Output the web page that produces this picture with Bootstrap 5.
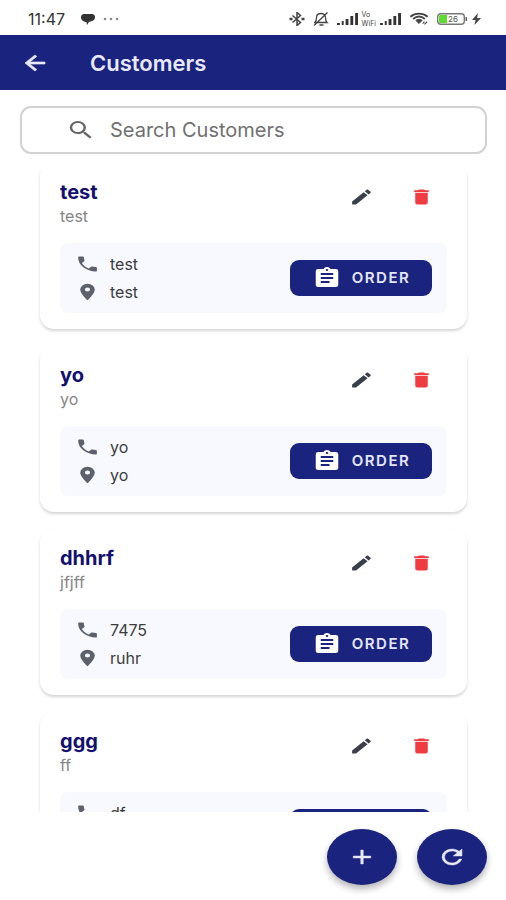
<!DOCTYPE html>
<html lang="en">
<head>
<meta charset="utf-8">
<meta name="viewport" content="width=device-width, initial-scale=1">
<title>Customers</title>
<link href="https://cdn.jsdelivr.net/npm/bootstrap@5.3.0/dist/css/bootstrap.min.css" rel="stylesheet">
<style>
:root { --navy: #1a237e; }
body { font-family: Inter, Roboto, sans-serif; background: #fff; color: #333; }
.ico { width: 30px; height: 24px; fill: currentColor; flex: none; display: block; }
.ico-sm { width: 25px; height: 20px; }
.status-bar { height: 35px; padding: 2px 25px 0 28px; font-size: 16px; color: #333; }
.status-bar svg { display: block; flex: none; }
.vowifi { font-size: 7px; line-height: 9px; color: #444; }
.app-bar { height: 55px; padding: 0 20px; background: var(--navy); color: #e8eafc; }
.app-title { font-size: 22px; line-height: 28px; font-weight: 600; margin-left: 40px; }
.search-box { margin: 16px 19px 0 20px; height: 48px; padding: 0 28px 0 44px; border: 2px solid #d2d2d2; border-radius: 11px; color: #666; }
.search-box input { font-size: 20px; color: #555; margin-left: 14px; min-width: 0; outline: 0; }
.search-box input::placeholder { color: #707070; opacity: 1; }
.customer-list { min-height: 0; padding: 9px 39px 0 40px; gap: 17px; }
.customer { flex: none; height: 166px; padding: 17px 20px 16px; border-radius: 14px; background: #fff; box-shadow: 0 2px 3px rgba(0,0,0,.17); }
.customer-name { font-size: 20px; line-height: 24px; font-weight: 700; color: #14106e; }
.customer-sub { font-size: 16px; line-height: 20px; margin-top: 2px; color: #858585; }
.customer-actions { gap: 35px; padding: 7px 13px 0 0; }
.edit-btn { color: #3a3f4b; }
.delete-btn { color: #ef3b42; }
.info { height: 70px; padding: 0 15px; background: #f7f9fe; border-radius: 8px; }
.info-line { font-size: 16px; line-height: 20px; gap: 10px; color: #3c3c3c; }
.info-line .ico { color: #5c616c; }
.order-btn { width: 142px; height: 36px; gap: 10px; border-radius: 9px; background: var(--navy); color: #e4e7fb; font-size: 15px; font-weight: 600; letter-spacing: 1.5px; }
.order-btn .ico { color: #fff; }
.order-btn:hover { background: #283593; color: #fff; }
.fabs { height: 88px; padding: 17px 19px 0; gap: 20px; }
.fab { width: 70px; height: 56px; border-radius: 50%; background: var(--navy); color: #e8eafc; box-shadow: 0 4px 7px rgba(0,0,0,.3); }
.fab:hover { background: #283593; color: #fff; }
</style>
<script src="https://cdn.jsdelivr.net/npm/bootstrap@5.3.0/dist/js/bootstrap.bundle.min.js" defer></script>
</head>
<body class="vh-100 d-flex flex-column overflow-hidden">
<svg class="d-none" aria-hidden="true">
  <symbol id="i-back" viewBox="0 0 24 24" preserveAspectRatio="none"><path d="M20 11H7.83l5.59-5.59L12 4l-8 8 8 8 1.41-1.41L7.83 13H20z" stroke="currentColor" stroke-width=".6"/></symbol>
  <symbol id="i-search" viewBox="0 0 24 24" preserveAspectRatio="none"><path d="M15.5 14h-.79l-.28-.27A6.47 6.47 0 0 0 16 9.5 6.5 6.5 0 1 0 9.5 16c1.61 0 3.09-.59 4.23-1.57l.27.28v.79l5 4.99L20.49 19zm-6 0C7.01 14 5 11.99 5 9.5S7.01 5 9.5 5 14 7.01 14 9.5 11.99 14 9.5 14z"/></symbol>
  <symbol id="i-edit" viewBox="0 0 24 24" preserveAspectRatio="none"><path d="M20.71 7.04C21.1 6.65 21.1 6 20.71 5.63L18.37 3.29C18 2.9 17.35 2.9 16.96 3.29L15.12 5.12L18.87 8.87M3 17.25V21H6.75L17.81 9.93L14.06 6.18Z"/></symbol>
  <symbol id="i-delete" viewBox="0 0 24 24" preserveAspectRatio="none"><path d="M19 4H15.5L14.5 3H9.5L8.5 4H5V6H19M6 19A2 2 0 0 0 8 21H16A2 2 0 0 0 18 19V7H6Z"/></symbol>
  <symbol id="i-phone" viewBox="0 0 24 24" preserveAspectRatio="none"><path d="M6.62 10.79C8.06 13.62 10.38 15.94 13.21 17.38L15.41 15.18C15.69 14.9 16.08 14.82 16.43 14.93C17.55 15.3 18.75 15.5 20 15.5A1 1 0 0 1 21 16.5V20A1 1 0 0 1 20 21A17 17 0 0 1 3 4A1 1 0 0 1 4 3H7.5A1 1 0 0 1 8.5 4C8.5 5.25 8.7 6.45 9.07 7.57C9.18 7.92 9.1 8.31 8.82 8.59Z"/></symbol>
  <symbol id="i-pin" viewBox="0 0 24 24" preserveAspectRatio="none"><path d="M12 11.5A2.5 2.5 0 0 1 9.5 9A2.5 2.5 0 0 1 12 6.5A2.5 2.5 0 0 1 14.5 9A2.5 2.5 0 0 1 12 11.5M12 2A7 7 0 0 0 5 9C5 14.25 12 22 12 22C12 22 19 14.25 19 9A7 7 0 0 0 12 2Z"/></symbol>
  <symbol id="i-clip" viewBox="0 0 24 24" preserveAspectRatio="none"><path d="M17 9H7V7H17M17 13H7V11H17M14 17H7V15H14M12 3A1 1 0 0 1 13 4A1 1 0 0 1 12 5A1 1 0 0 1 11 4A1 1 0 0 1 12 3M19 3H14.82C14.4 1.84 13.3 1 12 1C10.7 1 9.6 1.84 9.18 3H5A2 2 0 0 0 3 5V19A2 2 0 0 0 5 21H19A2 2 0 0 0 21 19V5A2 2 0 0 0 19 3Z"/></symbol>
  <symbol id="i-signal" viewBox="0 0 22 12" preserveAspectRatio="none"><path d="M0 10h3v2H0zM5 8h2v4H5zM9 6h3v6H9zM14 3h3v9h-3zM19 0h3v12h-3z"/></symbol>
</svg>

<div class="status-bar d-flex align-items-center flex-shrink-0">
  <span>11:47</span>
  <svg class="ms-3" width="14" height="12" viewBox="0 0 14 12" fill="#333" aria-hidden="true"><path d="M3 1h8c2 0 3 1.5 3 3s-1 3.500-3 4l-3 1-2 3-.5-3C2 9 0 6.500 0 4.500S1 1 3 1z"/></svg>
  <svg class="ms-2" width="16" height="4" viewBox="0 0 16 4" fill="#888" aria-hidden="true"><circle cx="2" cy="2" r="1.3"/><circle cx="8" cy="2" r="1.3"/><circle cx="14" cy="2" r="1.3"/></svg>
  <div class="ms-auto d-flex align-items-center">
    <svg width="16" height="14" viewBox="0 0 16 14" fill="none" stroke="#444" stroke-width="1.5" aria-hidden="true"><path d="M3.500 3.500l8 7L8 13.500V.5l3.500 3-8 7"/><path d="M.5 7h3M12.500 7h3" stroke-width="2.5"/></svg>
    <svg class="ms-2" width="16" height="14" viewBox="0 0 16 14" fill="none" stroke="#444" stroke-width="1.3" aria-hidden="true"><path d="M1 10.500h13c-1.500-1.200-1.500-2.500-1.500-5C12.500 3 10.500 1.500 8 1.500S3.500 3 3.500 5.500 3.500 9 2 10.500M6.500 13h4M1 13.500L14.500.5"/></svg>
    <svg class="ms-2" width="21" height="12" fill="#333" aria-hidden="true"><use href="#i-signal"/></svg>
    <span class="vowifi ms-1">Vo<br>WiFi</span>
    <svg class="ms-1" width="21" height="12" fill="#333" aria-hidden="true"><use href="#i-signal"/></svg>
    <svg class="ms-2" width="20" height="14" viewBox="0 0 22 14" fill="none" stroke="#444" aria-hidden="true"><path d="M1.500 4.500C7 0 15 0 20.500 4.500M4.500 7c4-3.300 9-3.300 13 0" stroke-width="2"/><path d="M7.500 8.500c2-1.500 5-1.500 7 0L11 12z" fill="#444"/><path d="M15 12l2-2M17 13l3-3" stroke-width="1.2"/></svg>
    <svg class="ms-2" width="31" height="12" viewBox="0 0 31 12" role="img" aria-label="Battery 26 percent"><rect x=".7" y=".7" width="26.6" height="10.6" rx="3" fill="#fff" stroke="#777" stroke-width="1.4"/><path d="M3.500 2H10v8H3.500C2.500 10 2 9.500 2 8.500v-5C2 2.500 2.500 2 3.500 2z" fill="#5fdb31"/><path d="M28.500 4H30v4h-1.500z" fill="#666"/><text x="11" y="9" font-size="8" fill="#555">26</text></svg>
    <svg class="ms-1" width="9" height="12" viewBox="0 0 9 12" fill="#444" aria-hidden="true"><path d="M6 0L0 7h3.500L2.500 12 9 5H5z"/></svg>
  </div>
</div>

<header class="app-bar d-flex align-items-center flex-shrink-0">
  <button class="btn p-0 border-0 text-reset" type="button" aria-label="Back"><svg class="ico"><use href="#i-back"/></svg></button>
  <h1 class="app-title mb-0">Customers</h1>
</header>

<label class="search-box d-flex align-items-center flex-shrink-0">
  <svg class="ico" aria-hidden="true"><use href="#i-search"/></svg>
  <input class="border-0 p-0 bg-transparent flex-grow-1" type="search" placeholder="Search Customers" aria-label="Search Customers">
</label>

<main class="customer-list flex-grow-1 d-flex flex-column overflow-hidden">
  <article class="customer d-flex flex-column justify-content-between">
    <div class="d-flex justify-content-between align-items-start">
      <div><h2 class="customer-name mb-0">test</h2><p class="customer-sub mb-0">test</p></div>
      <div class="customer-actions d-flex">
        <button class="btn p-0 border-0 edit-btn" type="button" aria-label="Edit test"><svg class="ico ico-sm"><use href="#i-edit"/></svg></button>
        <button class="btn p-0 border-0 delete-btn" type="button" aria-label="Delete test"><svg class="ico ico-sm"><use href="#i-delete"/></svg></button>
      </div>
    </div>
    <div class="info d-flex align-items-center justify-content-between">
      <div class="d-flex flex-column gap-2">
        <div class="info-line d-flex"><svg class="ico ico-sm"><use href="#i-phone"/></svg><span>test</span></div>
        <div class="info-line d-flex"><svg class="ico ico-sm"><use href="#i-pin"/></svg><span>test</span></div>
      </div>
      <button class="order-btn btn p-0 border-0 d-flex align-items-center justify-content-center" type="button"><svg class="ico"><use href="#i-clip"/></svg>ORDER</button>
    </div>
  </article>
  <article class="customer d-flex flex-column justify-content-between">
    <div class="d-flex justify-content-between align-items-start">
      <div><h2 class="customer-name mb-0">yo</h2><p class="customer-sub mb-0">yo</p></div>
      <div class="customer-actions d-flex">
        <button class="btn p-0 border-0 edit-btn" type="button" aria-label="Edit yo"><svg class="ico ico-sm"><use href="#i-edit"/></svg></button>
        <button class="btn p-0 border-0 delete-btn" type="button" aria-label="Delete yo"><svg class="ico ico-sm"><use href="#i-delete"/></svg></button>
      </div>
    </div>
    <div class="info d-flex align-items-center justify-content-between">
      <div class="d-flex flex-column gap-2">
        <div class="info-line d-flex"><svg class="ico ico-sm"><use href="#i-phone"/></svg><span>yo</span></div>
        <div class="info-line d-flex"><svg class="ico ico-sm"><use href="#i-pin"/></svg><span>yo</span></div>
      </div>
      <button class="order-btn btn p-0 border-0 d-flex align-items-center justify-content-center" type="button"><svg class="ico"><use href="#i-clip"/></svg>ORDER</button>
    </div>
  </article>
  <article class="customer d-flex flex-column justify-content-between">
    <div class="d-flex justify-content-between align-items-start">
      <div><h2 class="customer-name mb-0">dhhrf</h2><p class="customer-sub mb-0">jfjff</p></div>
      <div class="customer-actions d-flex">
        <button class="btn p-0 border-0 edit-btn" type="button" aria-label="Edit dhhrf"><svg class="ico ico-sm"><use href="#i-edit"/></svg></button>
        <button class="btn p-0 border-0 delete-btn" type="button" aria-label="Delete dhhrf"><svg class="ico ico-sm"><use href="#i-delete"/></svg></button>
      </div>
    </div>
    <div class="info d-flex align-items-center justify-content-between">
      <div class="d-flex flex-column gap-2">
        <div class="info-line d-flex"><svg class="ico ico-sm"><use href="#i-phone"/></svg><span>7475</span></div>
        <div class="info-line d-flex"><svg class="ico ico-sm"><use href="#i-pin"/></svg><span>ruhr</span></div>
      </div>
      <button class="order-btn btn p-0 border-0 d-flex align-items-center justify-content-center" type="button"><svg class="ico"><use href="#i-clip"/></svg>ORDER</button>
    </div>
  </article>
  <article class="customer d-flex flex-column justify-content-between">
    <div class="d-flex justify-content-between align-items-start">
      <div><h2 class="customer-name mb-0">ggg</h2><p class="customer-sub mb-0">ff</p></div>
      <div class="customer-actions d-flex">
        <button class="btn p-0 border-0 edit-btn" type="button" aria-label="Edit ggg"><svg class="ico ico-sm"><use href="#i-edit"/></svg></button>
        <button class="btn p-0 border-0 delete-btn" type="button" aria-label="Delete ggg"><svg class="ico ico-sm"><use href="#i-delete"/></svg></button>
      </div>
    </div>
    <div class="info d-flex align-items-center justify-content-between">
      <div class="d-flex flex-column gap-2">
        <div class="info-line d-flex"><svg class="ico ico-sm"><use href="#i-phone"/></svg><span>df</span></div>
        <div class="info-line d-flex"><svg class="ico ico-sm"><use href="#i-pin"/></svg></div>
      </div>
      <button class="order-btn btn p-0 border-0 d-flex align-items-center justify-content-center" type="button"><svg class="ico"><use href="#i-clip"/></svg>ORDER</button>
    </div>
  </article>
</main>

<footer class="fabs d-flex justify-content-end align-items-start flex-shrink-0">
  <button class="fab btn p-0 border-0 d-flex align-items-center justify-content-center" type="button" aria-label="Add customer"><svg class="ico" viewBox="0 0 24 24" preserveAspectRatio="none"><path d="M19 13H13V19H11V13H5V11H11V5H13V11H19Z" stroke="currentColor" stroke-width=".4"/></svg></button>
  <button class="fab btn p-0 border-0 d-flex align-items-center justify-content-center" type="button" aria-label="Refresh"><svg class="ico" viewBox="0 0 24 24" preserveAspectRatio="none"><path d="M17.65 6.35C16.2 4.9 14.21 4 12 4A8 8 0 0 0 4 12A8 8 0 0 0 12 20C15.73 20 18.84 17.45 19.73 14H17.65C16.83 16.33 14.61 18 12 18A6 6 0 0 1 6 12A6 6 0 0 1 12 6C13.66 6 15.14 6.69 16.22 7.78L13 11H20V4Z" stroke="currentColor" stroke-width=".4"/></svg></button>
</footer>
</body>
</html>
